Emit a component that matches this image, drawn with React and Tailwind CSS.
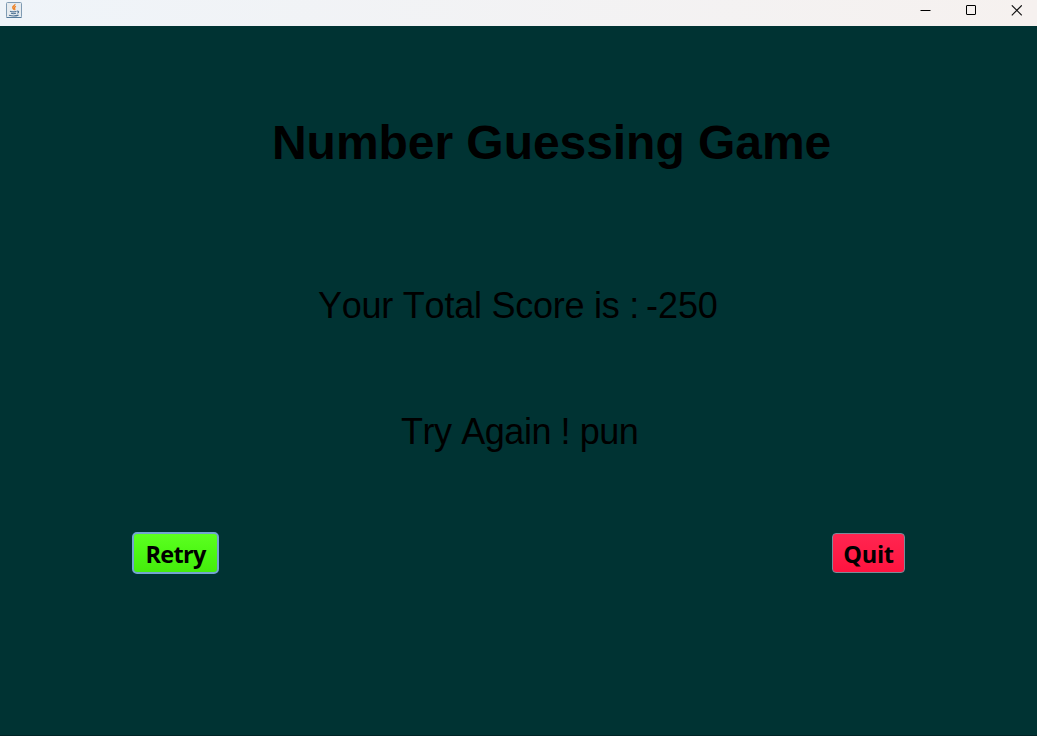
import React from "react";

function JavaIcon() {
  return (
    <svg width="16" height="16" viewBox="0 0 16 16" fill="none">
      <rect x="0.5" y="0.5" width="15" height="15" rx="1" fill="#e6ebef" stroke="#7f9bb3" />
      <path d="M0.5 15.5h15" stroke="#557b9c" />
      <path d="M9 2c.4 1.600-2.900 2.200-2.300 3.800.2.700.9 1.100 1.300 1.900M10 4.300c-1.800.8-2.100 1.400-1.300 2.300.4.500.2 1-.3 1.300" stroke="#ee8226" strokeWidth="1.300" />
      <path d="M4 9.300c1.800.6 5 .6 6.500 0M5 11.300c1.500.5 3.600.5 5 0M3 13.200c2.500.8 7 .8 9.500-.1M11 9.200c2-.4 2.200 1.400.2 2.100" stroke="#4f7395" strokeWidth="1.150" />
    </svg>
  );
}

function TitleBar() {
  return (
    <header className="flex h-[26px] shrink-0 justify-between bg-linear-to-r from-[#eff4f9] to-[#f6f1ef]">
      <div className="pt-[2px] pl-[6px]">
        <JavaIcon />
      </div>
      <div className="flex pt-[5px] pr-[15px]">
        <svg width="11" height="11" viewBox="0 0 11 11"><path d="M.5 5.500h10" stroke="#000" /></svg>
        <svg className="ml-[34px]" width="11" height="11" viewBox="0 0 11 11"><rect x="1.500" y=".5" width="9" height="9" rx=".4" fill="none" stroke="#000" /></svg>
        <svg className="ml-[35px]" width="11" height="11" viewBox="0 0 11 11"><path d="M.8.300l10 10M10.800.300l-10 10" stroke="#111" strokeWidth="1.100" /></svg>
      </div>
    </header>
  );
}

export default function App() {
  return (
    <div className="flex h-[736px] w-[1037px] flex-col overflow-hidden bg-[#003333] font-['Liberation_Sans',Arial,sans-serif] text-black">
      <TitleBar />
      <main className="flex flex-1 flex-col border-b border-[#002426] whitespace-nowrap">
        <h1 className="mt-[89px] pl-[272px] text-[48px] leading-[56px] font-bold tracking-[-0.05px] [font-kerning:none]">Number Guessing Game</h1>
        <p className="mt-[114px] pl-[318px] text-[36px] leading-[42px] tracking-[-0.24px] [font-kerning:none]">
          Your Total Score is :<span className="ml-[7px] tracking-[-0.1px]">-250</span>
        </p>
        <p className="mt-[84px] pl-[401px] text-[36px] leading-[42px] tracking-[-0.450px] [font-kerning:none]">Try Again ! pun</p>
        <div className="mt-[79px] flex items-start justify-between pr-[132px] pl-[132px] font-['Open_Sans','Noto_Sans',sans-serif] text-[23.5px] font-bold">
          <button className="flex h-[42px] w-[87px] items-center justify-center rounded-[5px] border-2 border-[#73a4d1] bg-linear-to-b from-[#5cff20] via-[#4df814] to-[#45ec0c] pt-[2px] leading-[32px] tracking-[-0.7px]">Retry</button>
          <button className="mt-[1px] flex h-[40px] w-[73px] items-center justify-center rounded-[4px] border border-[#7a8a99] bg-linear-to-b from-[#ff2550] to-[#ff123f] pt-[2px] leading-[32px] tracking-[-0.3px]">Quit</button>
        </div>
      </main>
    </div>
  );
}
